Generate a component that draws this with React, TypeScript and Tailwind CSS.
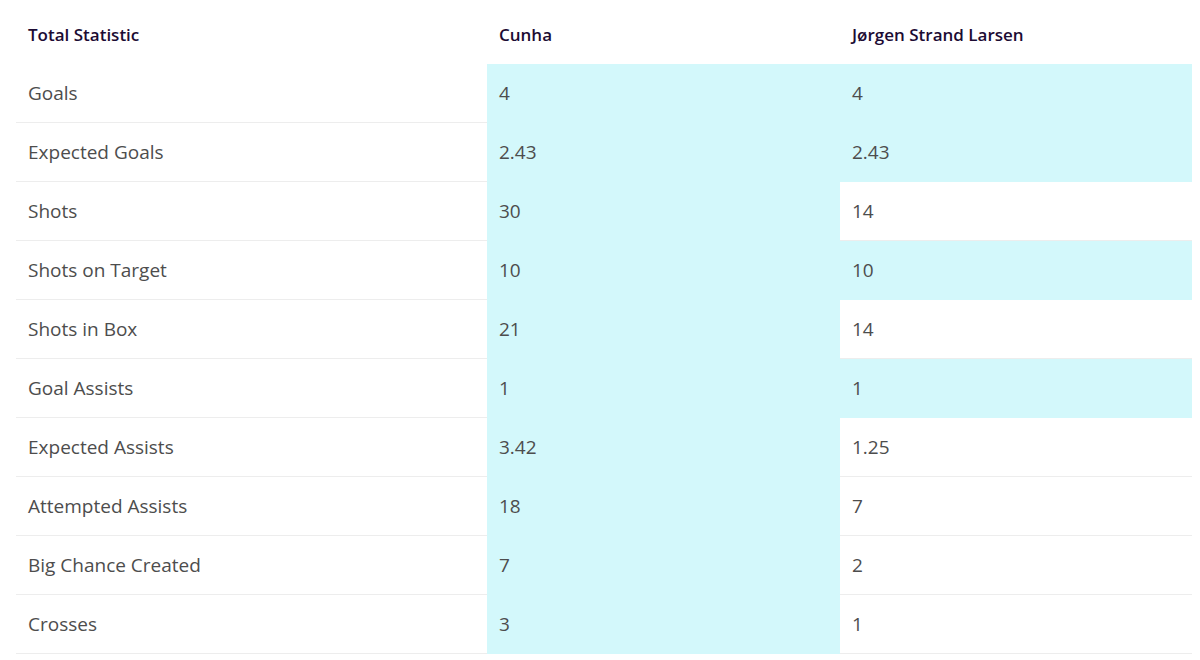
import React from "react";

type Row = { label: string; a: string; b: string; ha: boolean; hb: boolean };

const rows: Row[] = [
  { label: "Goals", a: "4", b: "4", ha: true, hb: true },
  { label: "Expected Goals", a: "2.43", b: "2.43", ha: true, hb: true },
  { label: "Shots", a: "30", b: "14", ha: true, hb: false },
  { label: "Shots on Target", a: "10", b: "10", ha: true, hb: true },
  { label: "Shots in Box", a: "21", b: "14", ha: true, hb: false },
  { label: "Goal Assists", a: "1", b: "1", ha: true, hb: true },
  { label: "Expected Assists", a: "3.42", b: "1.25", ha: true, hb: false },
  { label: "Attempted Assists", a: "18", b: "7", ha: true, hb: false },
  { label: "Big Chance Created", a: "7", b: "2", ha: true, hb: false },
  { label: "Crosses", a: "3", b: "1", ha: true, hb: false },
];

function Cell({ v, hl }: { v: string; hl: boolean }) {
  return (
    <div
      className={
        "h-[59px] flex items-center pl-3 text-[19px] text-[#4d4d4d] " +
        (hl ? "bg-[#d3f8fb]" : "border-b border-[#ededed]")
      }
    >
      {v}
    </div>
  );
}

export default function App() {
  return (
    <div
      className="w-[1200px] h-[660px] bg-white overflow-hidden"
      style={{ fontFamily: '"Open Sans", "Liberation Sans", sans-serif' }}
    >
      <div className="ml-4 w-[1176px] grid grid-cols-[471px_353px_352px]">
        <div className="h-[64px] flex items-center pl-3 pt-[6px] text-[17px] font-semibold text-[#1c0b33]">Total Statistic</div>
        <div className="h-[64px] flex items-center pl-3 pt-[6px] text-[17px] font-semibold text-[#1c0b33]">Cunha</div>
        <div className="h-[64px] flex items-center pl-3 pt-[6px] text-[17px] font-semibold text-[#1c0b33]">Jørgen Strand Larsen</div>
        {rows.map((r) => (
          <React.Fragment key={r.label}>
            <div className="h-[59px] flex items-center pl-3 text-[19px] text-[#4d4d4d] border-b border-[#ededed]">
              {r.label}
            </div>
            <Cell v={r.a} hl={r.ha} />
            <Cell v={r.b} hl={r.hb} />
          </React.Fragment>
        ))}
      </div>
    </div>
  );
}
